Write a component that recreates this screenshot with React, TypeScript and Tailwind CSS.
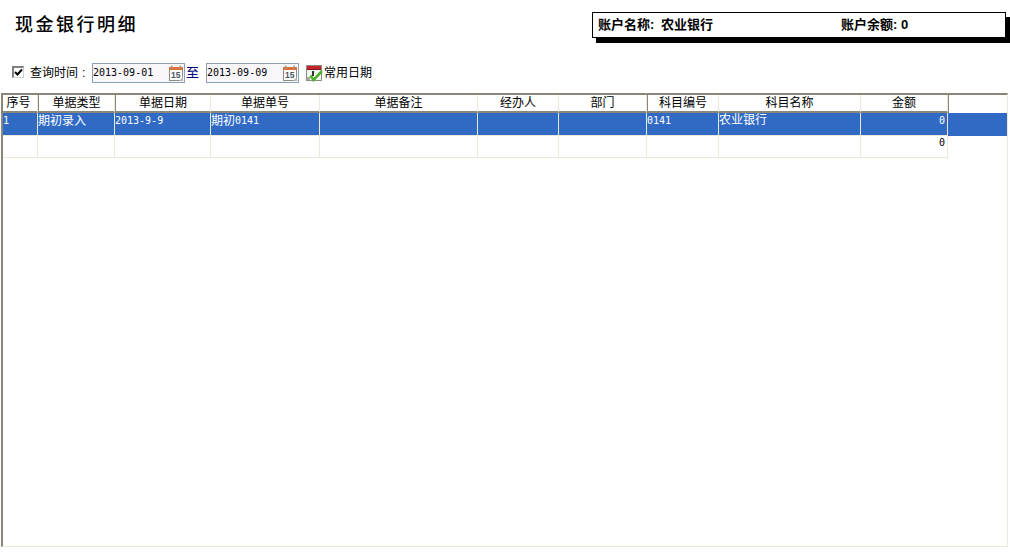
import { type FC, type ReactNode } from 'react'

const CJK = "font-['Liberation_Sans','Noto_Sans_CJK_SC',sans-serif]"
const MONO = "font-['DejaVu_Sans_Mono','Noto_Sans_CJK_SC',monospace]"

type Column = {
  label: string
  width: string
  darkLeft?: boolean
}

const COLUMNS: Column[] = [
  { label: '序号', width: 'w-[35px] pr-[3px]' },
  { label: '单据类型', width: 'w-[77px]', darkLeft: true },
  { label: '单据日期', width: 'w-[96px]', darkLeft: true },
  { label: '单据单号', width: 'w-[109px]' },
  { label: '单据备注', width: 'w-[158px]' },
  { label: '经办人', width: 'w-[81px]' },
  { label: '部门', width: 'w-[88px]' },
  { label: '科目编号', width: 'w-[72px]', darkLeft: true },
  { label: '科目名称', width: 'w-[142px]' },
  { label: '金额', width: 'w-[87px]' },
]

const CalendarIcon: FC = () => (
  <svg width="16" height="17" viewBox="0 0 16 17" className="shrink-0">
    <rect x="1.5" y="2.5" width="13" height="13" fill="#fdfdfb" stroke="#8c8c84" />
    <rect x="1" y="2" width="14" height="3" fill="#e0703a" />
    <rect x="3" y="0.5" width="1.5" height="3" fill="#9a9a92" />
    <rect x="11.5" y="0.5" width="1.5" height="3" fill="#9a9a92" />
    <text x="3" y="13" fontSize="8.5" fontWeight="700" fontFamily="Liberation Sans" fill="#4a5560">
      15
    </text>
    <path d="M11 16l4-4v4z" fill="#b8b8b0" />
  </svg>
)

const DateField: FC<{ value: string }> = ({ value }) => (
  <div className="flex h-[20px] w-[93px] items-center justify-between border border-[#8d9fb3] bg-[#faf7fc]">
    <span className={`${MONO} text-[10px] text-black`}>{value}</span>
    <CalendarIcon />
  </div>
)

const CommonDateIcon: FC = () => (
  <svg width="17" height="17" viewBox="0 0 17 17" className="shrink-0">
    <rect x="0.5" y="0.5" width="15" height="15" fill="#f6f6f2" stroke="#8c8c84" />
    <rect x="1" y="1" width="14" height="4" fill="#c8242c" />
    <rect x="1" y="4" width="14" height="1" fill="#7a1a20" />
    <rect x="6" y="6" width="2" height="5" fill="#333333" />
    <rect x="1" y="12" width="3" height="3" fill="#a9a9a1" />
    <path d="M4.5 10.5l3 4.5 8.5-9" fill="none" stroke="#4fb02e" strokeWidth="2.6" />
  </svg>
)

const Cell: FC<{ width: string; top?: boolean; right?: boolean; children?: ReactNode }> = ({
  width,
  top,
  right,
  children,
}) => (
  <div
    className={`${width} flex shrink-0 border-r border-b border-r-[#ece9d8] border-b-[#ece9d8] leading-[14px] ${
      top ? 'items-start' : 'items-start pt-px'
    } ${right ? 'justify-end pr-[2px]' : ''}`}
  >
    {children}
  </div>
)

const App = () => {
  return (
    <div className={`${CJK} flex h-[553px] w-[1010px] flex-col overflow-hidden bg-white text-xs text-black`}>
      <header className="flex h-[63px] items-start justify-between pl-[15px]">
        <h1 className="mt-[15px] text-[18px] leading-[21px] font-medium tracking-[2.5px]">现金银行明细</h1>
        <div className="mt-[12px] mr-[4px] flex h-[26px] w-[414px] items-center border border-black pl-[5px] text-[13px] font-bold shadow-[4px_5px_0_#000]">
          <span className="w-[243px]">
            账户名称: <span className="ml-[3px]">农业银行</span>
          </span>
          <span>账户余额: 0</span>
        </div>
      </header>

      <div className="flex h-[20px] items-center pl-[12px]">
        <span className="-mt-[2px] flex h-[12px] w-[12px] items-center justify-center border-t-2 border-r border-b border-l-2 border-t-[#808080] border-r-[#d4d0c8] border-b-[#d4d0c8] border-l-[#808080] bg-white">
          <svg width="9" height="9" viewBox="0 0 9 9">
            <path d="M1 4l2.5 2.5L8 1.5" fill="none" stroke="#000" strokeWidth="2" />
          </svg>
        </span>
        <span className="ml-[6px] w-[62px] leading-[14px]">
          查询时间<span className="ml-[4px]">:</span>
        </span>
        <DateField value="2013-09-01" />
        <span className="ml-[1px] w-[20px] text-[13px] text-[#000080]">至</span>
        <DateField value="2013-09-09" />
        <span className="ml-[7px]">
          <CommonDateIcon />
        </span>
        <span className="ml-[1px] leading-[14px]">常用日期</span>
      </div>

      <div className="mt-[10px] ml-[1px] flex h-[454px] w-[1007px] flex-col border-t-2 border-r border-b border-l-2 border-t-[#8a8778] border-r-[#ece9d8] border-b-[#ece9d8] border-l-[#8a8778]">
        <div className="flex h-[18px] shrink-0 bg-white">
          {COLUMNS.map(col => (
            <div
              key={col.label}
              className={`${col.width} flex shrink-0 items-center justify-center border-r border-b-2 border-r-[#ece9d8] border-b-[#8a8778] leading-[14px] ${
                col.darkLeft ? 'border-l border-l-[#8a8778]' : ''
              }`}
            >
              {col.label}
            </div>
          ))}
          <div className="flex-1 border-l border-l-[#8a8778]" />
        </div>

        <div className="flex h-[23px] shrink-0 bg-[#316ac5] text-white">
          <Cell width="w-[35px]">
            <span className={`${MONO} text-[10px]`}>1</span>
          </Cell>
          <Cell width="w-[77px]">期初录入</Cell>
          <Cell width="w-[96px]">
            <span className={`${MONO} text-[10px]`}>2013-9-9</span>
          </Cell>
          <Cell width="w-[109px]">
            期初<span className={`${MONO} text-[10px]`}>0141</span>
          </Cell>
          <Cell width="w-[158px]" />
          <Cell width="w-[81px]" />
          <Cell width="w-[88px]" />
          <Cell width="w-[72px]">
            <span className={`${MONO} text-[10px]`}>0141</span>
          </Cell>
          <Cell width="w-[142px]" top>
            农业银行
          </Cell>
          <Cell width="w-[87px]" right>
            <span className={`${MONO} text-[10px]`}>0</span>
          </Cell>
        </div>

        <div className="flex h-[22px] w-[945px] shrink-0 border-b border-b-[#ece9d8] bg-white">
          {COLUMNS.map((col, i) => (
            <div
              key={col.label}
              className={`${col.width} flex shrink-0 items-start justify-end border-r border-r-[#ece9d8] pr-[2px] leading-[14px]`}
            >
              {i === COLUMNS.length - 1 && <span className={`${MONO} text-[10px]`}>0</span>}
            </div>
          ))}
        </div>
      </div>
    </div>
  )
}

export default App
